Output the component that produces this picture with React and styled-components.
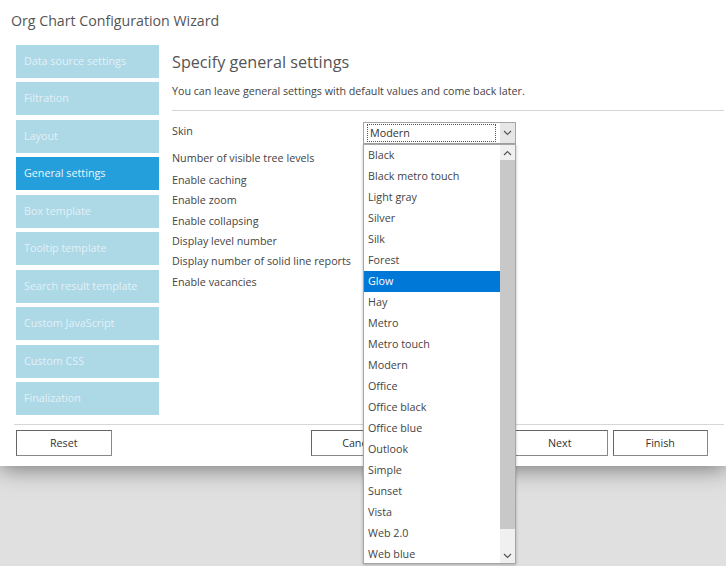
import React from 'react'
import styled, { createGlobalStyle } from 'styled-components'

const GlobalStyle = createGlobalStyle`
  html, body {
    margin: 0;
    height: 100%;
    background: #e0e0e0;
    overflow: hidden;
  }
  body {
    font-family: "Open Sans", "Noto Sans", "Liberation Sans", sans-serif;
    font-size: 10.75px;
    color: #444;
  }
`

const steps = [
  'Data source settings',
  'Filtration',
  'Layout',
  'General settings',
  'Box template',
  'Tooltip template',
  'Search result template',
  'Custom JavaScript',
  'Custom CSS',
  'Finalization'
]

const fields = [
  { label: 'Skin', height: 27 },
  { label: 'Number of visible tree levels', height: 22 },
  { label: 'Enable caching', height: 20 },
  { label: 'Enable zoom', height: 21 },
  { label: 'Enable collapsing', height: 20 },
  { label: 'Display level number', height: 20 },
  { label: 'Display number of solid line reports', height: 21 },
  { label: 'Enable vacancies', height: 20 }
]

const skins = [
  'Black', 'Black metro touch', 'Light gray', 'Silver', 'Silk', 'Forest', 'Glow',
  'Hay', 'Metro', 'Metro touch', 'Modern', 'Office', 'Office black', 'Office blue',
  'Outlook', 'Simple', 'Sunset', 'Vista', 'Web 2.0', 'Web blue'
]

const Chevron = ({ up }) => (
  <svg width='9' height='6' viewBox='0 0 9 6'>
    <path
      d={up ? 'M1 5L4.5 1.5L8 5' : 'M1 1L4.5 4.5L8 1'}
      fill='none'
      stroke='#555'
      strokeWidth='1.2'
    />
  </svg>
)

const App = () => (
  <>
    <GlobalStyle />
    <Dialog>
      <Title>Org Chart Configuration Wizard</Title>
      <Body>
        <Sidebar>
          {steps.map((step) => (
            <Step key={step} $active={step === 'General settings'}>{step}</Step>
          ))}
        </Sidebar>
        <Content>
          <Heading>Specify general settings</Heading>
          <Intro>You can leave general settings with default values and come back later.</Intro>
          <Form>
            {fields.map((field) => (
              <FieldLabel key={field.label} $height={field.height}>{field.label}</FieldLabel>
            ))}
          </Form>
        </Content>
      </Body>
      <Footer>
        <Button>Reset</Button>
        <Spacer />
        <Button>Cancel</Button>
        <Button>Back</Button>
        <Button>Next</Button>
        <Button>Finish</Button>
      </Footer>
      <Combo>
        <ComboHead>
          <ComboValue><span>Modern</span></ComboValue>
          <ComboArrow><Chevron /></ComboArrow>
        </ComboHead>
        <ComboPopup>
          <ComboList>
            {skins.map((skin) => (
              <ComboItem key={skin} $selected={skin === 'Glow'}>{skin}</ComboItem>
            ))}
          </ComboList>
          <Scrollbar>
            <ScrollButton><Chevron up /></ScrollButton>
            <ScrollThumb />
            <ScrollButton><Chevron /></ScrollButton>
          </Scrollbar>
        </ComboPopup>
      </Combo>
    </Dialog>
  </>
)

const Dialog = styled.div`
  position: relative;
  width: 726px;
  height: 466px;
  background: #fff;
  box-shadow: 0 2px 22px rgba(0, 0, 0, 0.5);
`

const Title = styled.div`
  height: 45px;
  box-sizing: border-box;
  padding: 10px 0 0 11px;
  font-size: 14.2px;
  line-height: 21px;
  color: #555;
`

const Body = styled.div`
  display: flex;
  height: 379px;
  margin: 0 2px 0 14px;
  border-bottom: 1px solid #d6d6d6;
`

const Sidebar = styled.div`
  display: flex;
  flex-direction: column;
  gap: 4.44px;
  width: 143px;
  margin-left: 2px;
`

const Step = styled.div`
  height: 33px;
  padding-left: 8px;
  line-height: 33px;
  color: ${({ $active }) => ($active ? '#eaf6fc' : '#e2f1f7')};
  background: ${({ $active }) => ($active ? '#259fdb' : '#add8e6')};
`

const Content = styled.div`
  flex: 1;
  margin-left: 13px;
`

const Heading = styled.div`
  padding-top: 5px;
  font-size: 16.2px;
  line-height: 24px;
  color: #555;
`

const Intro = styled.div`
  height: 37px;
  box-sizing: border-box;
  padding-top: 9px;
  border-bottom: 1px solid #d6d6d6;
  font-size: 10.7px;
  line-height: 16px;
  white-space: nowrap;
`

const Form = styled.div`
  display: flex;
  flex-direction: column;
  padding-top: 12px;
`

const FieldLabel = styled.div`
  height: ${({ $height }) => $height}px;
  line-height: 16px;
  white-space: nowrap;
`

const Footer = styled.div`
  display: flex;
  gap: 5px;
  padding: 5px 18px 0 16px;
`

const Spacer = styled.div`
  flex: 1;
`

const Button = styled.div`
  width: 95.5px;
  height: 26px;
  box-sizing: border-box;
  border: 1px solid #666;
  border-bottom-color: #888;
  border-right-color: #888;
  background: #fff;
  line-height: 24px;
  text-align: center;
  color: #333;
`

const Combo = styled.div`
  position: absolute;
  top: 122px;
  left: 363px;
  width: 153px;
`

const ComboHead = styled.div`
  display: flex;
  height: 22px;
  box-sizing: border-box;
  border: 1px solid #a6a6a6;
  background: #fff;
`

const ComboValue = styled.div`
  flex: 1;
  margin: 1px 4px 1px 3px;
  padding-left: 2px;
  border: 1px dotted #555;
  line-height: 16px;
  color: #333;
`

const ComboArrow = styled.div`
  display: flex;
  align-items: center;
  justify-content: center;
  width: 15px;
  background: #e6e6e6;
`

const ComboPopup = styled.div`
  display: flex;
  height: 420px;
  box-sizing: border-box;
  border: 1px solid #a6a6a6;
  background: #fff;
  box-shadow: 0 1px 3px rgba(0, 0, 0, 0.25);
`

const ComboList = styled.div`
  flex: 1;
  overflow: hidden;
`

const ComboItem = styled.div`
  height: 21px;
  padding-left: 4px;
  line-height: 21px;
  color: ${({ $selected }) => ($selected ? '#fff' : '#444')};
  background: ${({ $selected }) => ($selected ? '#0078d7' : 'transparent')};
`

const Scrollbar = styled.div`
  display: flex;
  flex-direction: column;
  width: 15px;
  background: #f0f0f0;
`

const ScrollButton = styled.div`
  display: flex;
  align-items: center;
  justify-content: center;
  height: 15px;
`

const ScrollThumb = styled.div`
  height: 369px;
  margin-bottom: auto;
  background: #c8c8c8;
`

export default App
